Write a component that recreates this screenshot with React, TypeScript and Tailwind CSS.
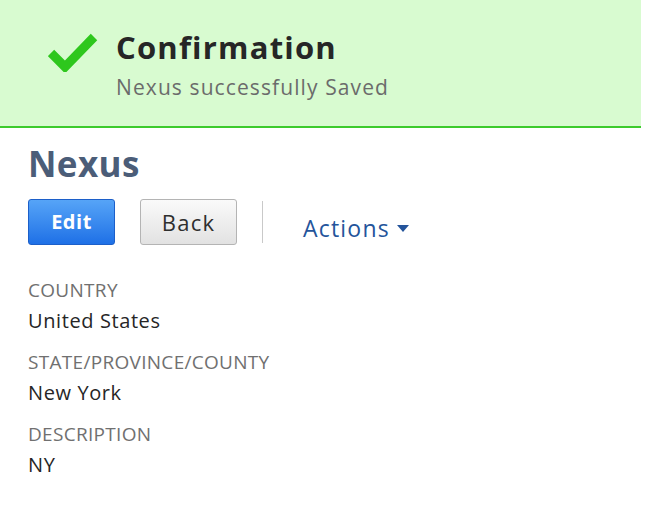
export default function App() {
  return (
    <div className="w-[645px] h-[520px] bg-white font-['Open_Sans',sans-serif]">
      {/* Confirmation banner */}
      <div className="w-[641px] h-[128px] bg-[#d8fbd0] border-b-2 border-[#3ccb2c] flex items-start pl-[48px] pt-[28px]">
        <svg width="50" height="42" viewBox="0 0 50 42" className="mt-[2px]">
          <path d="M3 23 L17 37 L46 7" fill="none" stroke="#2ec71d" strokeWidth="9" />
        </svg>
        <div className="ml-[18px] flex flex-col">
          <span className="text-[31px] leading-[38px] font-bold tracking-[1.2px] text-[#262626]">Confirmation</span>
          <span className="text-[21px] leading-[26px] tracking-[1.1px] text-[#6b6b6b] mt-[8px]">Nexus successfully Saved</span>
        </div>
      </div>

      <div className="pl-[28px]">
        <h1 className="text-[35px] leading-[40px] font-bold tracking-[0.4px] text-[#4b5d78] mt-[16px]">Nexus</h1>

        <div className="flex items-center mt-[15px] h-[46px]">
          <button className="w-[87px] h-[46px] rounded-[3px] border border-[#1c5fc9] bg-gradient-to-b from-[#56a4f7] to-[#1e70e6] text-white text-[20px] tracking-[0.5px] font-bold">
            Edit
          </button>
          <button className="ml-[25px] w-[97px] h-[46px] rounded-[3px] border border-[#b4b4b4] bg-gradient-to-b from-[#fafafa] to-[#e2e2e2] text-[#2e2e2e] text-[22px] tracking-[1.2px]">
            Back
          </button>
          <div className="ml-[25px] w-px h-[42px] bg-[#c9c9c9]" />
          <div className="ml-[40px] mt-[12px] flex items-center text-[23px] tracking-[1.2px] text-[#24549b]">
            Actions
            <svg width="12" height="8" viewBox="0 0 12 8" className="ml-[7px] mt-[2px]">
              <path d="M0 0 L12 0 L6 7 Z" fill="#24549b" />
            </svg>
          </div>
        </div>

        <div className="mt-[30px] flex flex-col">
          <Field label="COUNTRY" value="United States" />
          <Field label="STATE/PROVINCE/COUNTY" value="New York" />
          <Field label="DESCRIPTION" value="NY" />
        </div>
      </div>
    </div>
  )
}

function Field({ label, value }: { label: string; value: string }) {
  return (
    <div className="mb-[10px]">
      <div className="text-[19px] leading-[30px] tracking-[0.3px] text-[#707070]">{label}</div>
      <div className="text-[20px] leading-[32px] tracking-[0.6px] text-[#262626]">{value}</div>
    </div>
  )
}
